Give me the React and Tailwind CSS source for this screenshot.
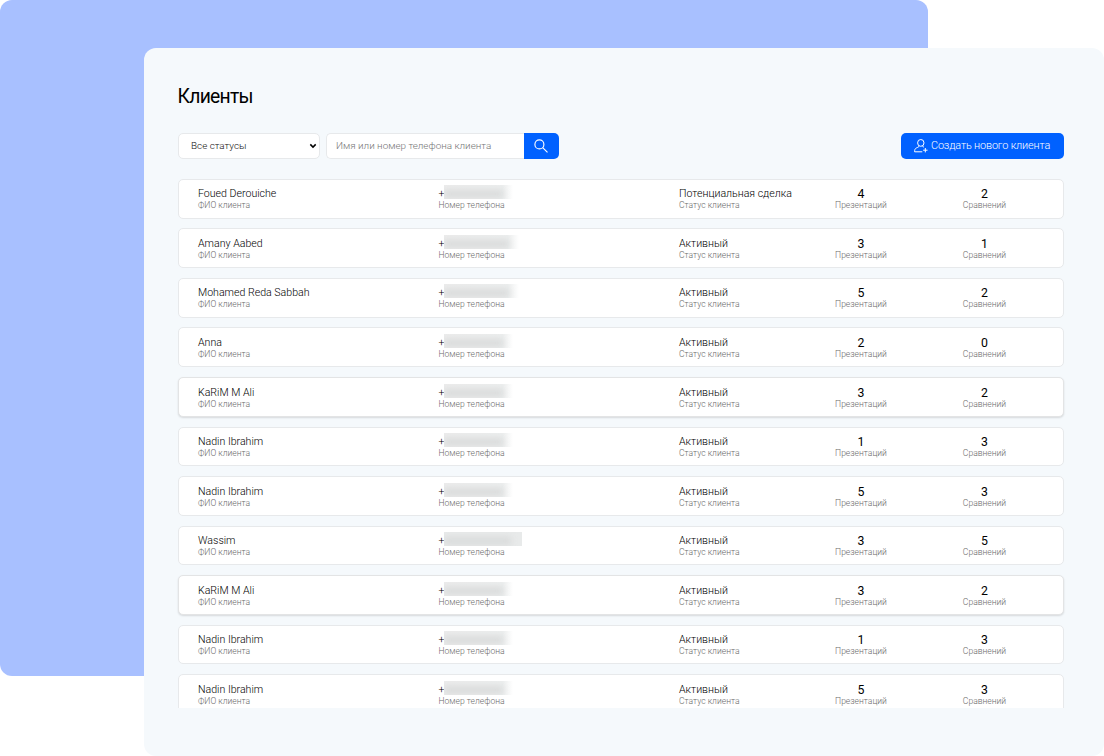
import React from "react";

const clients = [
  { name: "Foued Derouiche", status: "Потенциальная сделка", pres: 4, comp: 2, mask: "w-[69px]" },
  { name: "Amany Aabed", status: "Активный", pres: 3, comp: 1, mask: "w-[75px]" },
  { name: "Mohamed Reda Sabbah", status: "Активный", pres: 5, comp: 2, mask: "w-[75px]" },
  { name: "Anna", status: "Активный", pres: 2, comp: 0, mask: "w-[69px]" },
  { name: "KaRiM M Ali", status: "Активный", pres: 3, comp: 2, mask: "w-[69px]", raised: true },
  { name: "Nadin Ibrahim", status: "Активный", pres: 1, comp: 3, mask: "w-[69px]" },
  { name: "Nadin Ibrahim", status: "Активный", pres: 5, comp: 3, mask: "w-[69px]" },
  { name: "Wassim", status: "Активный", pres: 3, comp: 5, mask: "w-[78px]", solid: true },
  { name: "KaRiM M Ali", status: "Активный", pres: 3, comp: 2, mask: "w-[69px]", raised: true },
  { name: "Nadin Ibrahim", status: "Активный", pres: 1, comp: 3, mask: "w-[69px]" },
  { name: "Nadin Ibrahim", status: "Активный", pres: 5, comp: 3, mask: "w-[69px]" },
];

const valueClass = "h-[13px] text-[10.6px] leading-[13px] font-light text-black";
const labelClass = "h-[10px] text-[8.55px] leading-[10px] font-light text-[#6a6a6a]";

function Field({ label, children, className }) {
  return (
    <div className={"shrink-0 whitespace-nowrap " + className}>
      <div className={valueClass}>{children}</div>
      <div className={labelClass}>{label}</div>
    </div>
  );
}

function Counter({ value, label, className }) {
  return (
    <div className={"shrink-0 whitespace-nowrap text-center " + className}>
      <div className="h-[13px] text-[12.3px] leading-[14px] font-normal text-black">{value}</div>
      <div className={labelClass}>{label}</div>
    </div>
  );
}

function HiddenNumber({ mask, solid }) {
  return (
    <span
      className={
        "-mt-[2px] flex h-[14px] items-end overflow-hidden " +
        mask +
        (solid ? " bg-[#e8eaea]" : " bg-linear-to-r from-[#ececec] from-0% via-[#eceeee] via-85% to-white to-100%")
      }
    >
      <span className="mb-px h-[8px] w-[86%] bg-[#d9dbdb] blur-[3px]" />
    </span>
  );
}

function ClientRow({ client }) {
  return (
    <div
      className={
        "flex h-[39.7px] shrink-0 rounded-[5px] border bg-white pt-[7.5px] pl-[19px] " +
        (client.raised
          ? "border-[#e3e4e5] shadow-[0_1px_2px_rgba(0,0,0,0.13)]"
          : "border-[#e7e9eb]")
      }
    >
      <Field label="ФИО клиента" className="w-[240.5px]">{client.name}</Field>
      <Field label="Номер телефона" className="w-[240.5px]">
        <span className="flex">
          <span className="w-[5.5px]">+</span>
          <HiddenNumber mask={client.mask} solid={client.solid} />
        </span>
      </Field>
      <Field label="Статус клиента" className="w-[120px]">{client.status}</Field>
      <Counter value={client.pres} label="Презентаций" className="w-[124px]" />
      <Counter value={client.comp} label="Сравнений" className="w-[123px]" />
    </div>
  );
}

function Toolbar() {
  return (
    <div className="flex h-[26.5px] items-center text-[10.5px] font-light">
      <div className="flex h-[26px] w-[142px] items-center justify-between rounded-[5px] border border-[#e7e9eb] bg-white pr-[2px] pl-3 text-[#111]">
        <span className="pt-[1.5px] text-[9.9px]">Все статусы</span>
        <svg width="8" height="6" viewBox="0 0 8 6" fill="none" stroke="#000" strokeWidth="1.5">
          <path d="M1.3 1.4 4 4.1 6.7 1.4" />
        </svg>
      </div>
      <div className="ml-[6px] flex h-[26px] w-[198px] items-center rounded-l-[5px] border border-r-0 border-[#e7e9eb] bg-white pl-[9px]">
        <span className="whitespace-nowrap pt-[1.5px] text-[9.9px] text-[#757575]">Имя или номер телефона клиента</span>
      </div>
      <button className="flex h-[26.5px] w-[34.5px] items-center justify-center rounded-r-[5px] bg-[#0061ff]">
        <svg width="14" height="14" viewBox="0 0 14 14" fill="none" stroke="#fff" strokeWidth="1.15">
          <circle cx="5.4" cy="5.4" r="4.5" />
          <path d="m8.7 8.7 4.8 4.6" />
        </svg>
      </button>
      <button className="ml-auto flex h-[26.5px] w-[162.5px] items-center rounded-[5px] bg-[#0061ff] pl-[13px] text-white">
        <svg width="14" height="14" viewBox="0 0 14 14" fill="none" stroke="#fff" strokeWidth="1">
          <ellipse cx="6.8" cy="3.9" rx="3.2" ry="3.4" />
          <path d="M5.1 6.9C5 8 3.7 8.3 2.3 9 1 9.7.6 10.8.6 12.8H8.3M8.5 6.9c.1.7.6.9 1.3 1.2M11.3 9v4.4M9.1 11.2h4.4" />
        </svg>
        <span className="ml-[3px] whitespace-nowrap text-[10.9px] font-light tracking-[-0.16px]">Создать нового клиента</span>
      </button>
    </div>
  );
}

export default function App() {
  return (
    <div className="relative h-[756px] w-[1104px] overflow-hidden bg-white pt-12 pl-36 font-['Roboto',sans-serif]">
      <div className="absolute top-0 left-0 h-[676px] w-[928px] rounded-xl bg-[#a8c0ff]" />
      <main className="relative flex h-[708px] w-[960px] flex-col rounded-xl bg-[#f5f9fc] pr-[40.5px] pb-12 pl-[34px]">
        <h1 className="mt-[37px] -ml-[0.5px] h-6 text-[19.3px] leading-6 font-normal tracking-[-0.7px] text-black">Клиенты</h1>
        <div className="mt-[23.5px]">
          <Toolbar />
        </div>
        <div className="-mx-1 mt-[17.9px] flex min-h-0 flex-1 flex-col gap-[9.85px] overflow-hidden px-1 pt-[2px]">
          {clients.map((client, index) => (
            <ClientRow key={index} client={client} />
          ))}
        </div>
      </main>
    </div>
  );
}
